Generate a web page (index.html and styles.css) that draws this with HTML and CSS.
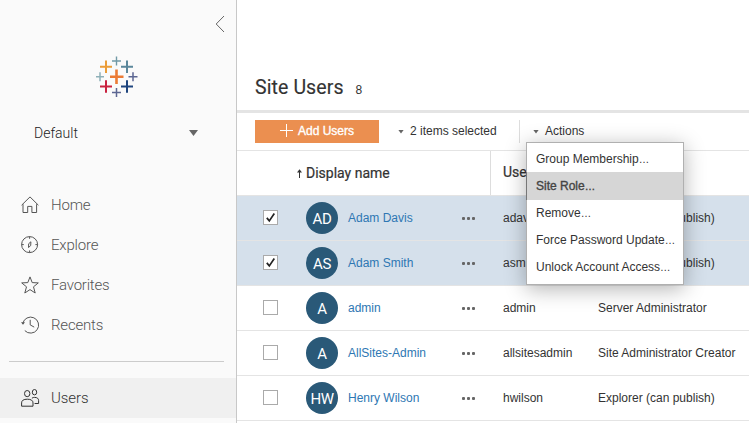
FILE: index.html
```html
<!DOCTYPE html>
<html lang="en">
<head>
<meta charset="utf-8">
<title>Site Users</title>
<link rel="stylesheet" href="styles.css">
</head>
<body>
<div class="app">
  <aside class="sidebar">
    <svg class="collapse" viewBox="0 0 10 18"><path d="M9 1 1.2 9 9 17"/></svg>
    <svg class="logo" viewBox="0 0 42 42">
      <g fill="none">
        <path stroke="#eb7b35" stroke-width="2.6" d="M20.5 13.5v14.5M14 20.7h13.5"/>
        <path stroke="#eb9c37" stroke-width="2" d="M10 4.5v12.4M4 10.8h12"/>
        <path stroke="#5b879b" stroke-width="2" d="M31 4.500v12.4M25 10.800h12"/>
        <path stroke="#c9223f" stroke-width="2" d="M10 24.300v12.400M4 30.500h12"/>
        <path stroke="#1f457e" stroke-width="2" d="M31 24.300v12.400M25 30.500h12"/>
        <path stroke="#7199a6" stroke-width="1.4" d="M20.500 .5v9M16 5h9"/>
        <path stroke="#5c6692" stroke-width="1.5" d="M20.500 32v9M16 36.500h9M37 16.200v9M32.500 20.700h9"/>
        <path stroke="#8eb0b8" stroke-width="1.500" d="M4 16.200v9M0 20.700h8"/>
      </g>
    </svg>
    <div class="site-picker"><span>Default</span><i class="caret caret-lg"></i></div>
    <nav>
      <a class="nav-item"><svg viewBox="0 0 18 18"><path d="M.6 9.200 9 .9l8.400 8.300M2 8.200v8.300h4.700v-6.100h4.200v6.100h4.700V8.200"/></svg>Home</a>
      <a class="nav-item"><svg viewBox="0 0 18 18"><circle cx="8.600" cy="8.600" r="8"/><path d="M8.600.5v2.300M8.600 14.400v2.300M.5 8.600h2.300M14.400 8.600h2.300M9.900 5.800 9.700 9.600 7.500 11.500 7.700 7.700z"/></svg>Explore</a>
      <a class="nav-item"><svg viewBox="0 0 18 18"><path d="m9 .9 2.200 5.700 6.100.3-4.800 3.900 1.700 6.200L9 13.600 3.800 17l1.700-6.200L.7 6.900l6.100-.3z"/></svg>Favorites</a>
      <a class="nav-item"><svg viewBox="0 0 18 18"><path d="M1.800 7.400A8 8 0 1 1 3.800 14.600M9.200 3.800v5.100l4 2.200"/><path class="solid" d="M0 6.200h4L2 8.800z"/></svg>Recents</a>
    </nav>
    <hr>
    <a class="nav-item active"><svg viewBox="0 0 18 18"><ellipse cx="6.200" cy="4.600" rx="2.700" ry="3.100"/><ellipse cx="13.500" cy="3.200" rx="2.200" ry="2.700"/><path d="M.6 17.200v-3.300c0-2.500 2-3.700 5.700-3.700s5.700 1.200 5.700 3.700v3.300zM10.900 9.200c1-.7 1.800-.8 2.700-.8 2.700 0 4 1.200 4 3.200v2.900h-4"/></svg>Users</a>
  </aside>

  <main>
    <header><h1>Site Users</h1><span class="count">8</span></header>
    <div class="toolbar">
      <button class="add"><svg viewBox="0 0 13 13"><path d="M6.500 0v13M0 6.500h13"/></svg>Add Users</button>
      <span class="selected"><i class="caret"></i>2 items selected</span>
      <div class="actions"><i class="caret"></i>Actions
        <div class="menu">
          <div class="menu-item">Group Membership<span class="dots">…</span></div>
          <div class="menu-item hover">Site Role<span class="dots">…</span></div>
          <div class="menu-item">Remove<span class="dots">…</span></div>
          <div class="menu-item">Force Password Update<span class="dots">…</span></div>
          <div class="menu-item">Unlock Account Access<span class="dots">…</span></div>
        </div>
      </div>
    </div>
    <div class="row head">
      <div class="sort"><svg viewBox="0 0 5 9"><path d="M2.500 1v8"/><path class="solid" d="M0 3.500 2.500 .3 5 3.500z"/></svg>Display name</div>
      <div class="username">Username</div>
    </div>
    <div class="row chosen">
      <span class="check"><svg viewBox="0 0 13 13"><path d="m2.800 6.900 2.500 3L10.300 2.500"/></svg></span>
      <span class="avatar">AD</span><a class="name">Adam Davis</a><span class="more"><i></i><i></i><i></i></span>
      <span class="user">adavis</span><span>Explorer (can publish)</span>
    </div>
    <div class="row chosen">
      <span class="check"><svg viewBox="0 0 13 13"><path d="m2.800 6.900 2.500 3L10.300 2.500"/></svg></span>
      <span class="avatar">AS</span><a class="name">Adam Smith</a><span class="more"><i></i><i></i><i></i></span>
      <span class="user">asmith</span><span>Explorer (can publish)</span>
    </div>
    <div class="row">
      <span class="check"></span>
      <span class="avatar">A</span><a class="name">admin</a><span class="more"><i></i><i></i><i></i></span>
      <span class="user">admin</span><span>Server Administrator</span>
    </div>
    <div class="row">
      <span class="check"></span>
      <span class="avatar">A</span><a class="name">AllSites-Admin</a><span class="more"><i></i><i></i><i></i></span>
      <span class="user">allsitesadmin</span><span>Site Administrator Creator</span>
    </div>
    <div class="row">
      <span class="check"></span>
      <span class="avatar">HW</span><a class="name">Henry Wilson</a><span class="more"><i></i><i></i><i></i></span>
      <span class="user">hwilson</span><span>Explorer (can publish)</span>
    </div>
  </main>
</div>
</body>
</html>
```
FILE: styles.css
```css
* { box-sizing: border-box; }

body {
  margin: 0;
  overflow: hidden;
  background: #fff;
  color: #333;
  font: 12px/16px "Liberation Sans", Arial, sans-serif;
}

.app { display: flex; height: 423px; }

svg { display: block; fill: none; stroke: currentColor; overflow: visible; }
.solid { fill: currentColor; stroke: none; }

.sidebar {
  display: flex;
  flex-direction: column;
  flex: none;
  width: 237px;
  background: #fafafa;
  border-right: 1px solid #c8c8c8;
}

.collapse { width: 10px; height: 18px; margin: 15px 11px 0 auto; color: #666; flex: none; }
.logo { width: 42px; height: 42px; margin: 23px 0 0 96px; flex: none; }

.site-picker {
  display: flex;
  align-items: center;
  justify-content: space-between;
  height: 20px;
  margin: 25px 38px 0 34px;
  font: 300 14px/20px Roboto, sans-serif;
  color: #222;
}

.caret {
  flex: none;
  width: 6px;
  height: 4px;
  margin-top: 1px;
  background: #666;
  clip-path: polygon(0 0, 100% 0, 50% 100%);
}
.caret-lg { width: 9px; height: 6px; margin-top: 0; }

nav { margin-top: 42px; }

.nav-item {
  display: flex;
  align-items: center;
  gap: 12px;
  height: 40px;
  padding-left: 21px;
  font: 300 15px/20px Roboto, sans-serif;
  letter-spacing: -.2px;
  color: #555;
}
.nav-item svg { width: 18px; height: 18px; stroke-width: 1; }

hr { width: 215px; height: 1px; margin: 16px 0 16px 9px; border: 0; background: #ccc; flex: none; }
.active { flex: none; background: #f0f0f0; color: #333; letter-spacing: -.1px; }

main { flex: 1; min-width: 0; }

header {
  display: flex;
  align-items: baseline;
  gap: 12px;
  height: 113px;
  padding: 76px 0 0 18px;
  border-bottom: 3px solid #e4e4e4;
}
h1 { margin: 0; font: 400 19.5px/24px Roboto, sans-serif; letter-spacing: .1px; -webkit-text-stroke: .15px #333; }
.count { font-size: 12px; }

.toolbar {
  display: flex;
  align-items: center;
  height: 38px;
  padding-left: 18px;
  border-bottom: 1px solid #e4e4e4;
}
.add {
  display: flex;
  align-items: center;
  justify-content: center;
  gap: 5px;
  width: 124px;
  height: 23px;
  padding: 0 0 2px;
  border: 0;
  background: #eb8f50;
  color: #fff;
  font: 400 12px/16px "Liberation Sans", Arial, sans-serif;
  -webkit-text-stroke: .35px #fff;
}
.add svg { width: 13px; height: 13px; }
.selected { display: flex; align-items: center; gap: 6px; width: 140px; padding: 0 0 1px 19px; }

.actions {
  position: relative;
  display: flex;
  align-items: center;
  gap: 6px;
  height: 23px;
  padding: 0 0 1px 13px;
  border-left: 1px solid #ddd;
}

.menu {
  position: absolute;
  left: 6px;
  top: 22px;
  width: 158px;
  height: 143px;
  padding-top: 2px;
  background: #fff;
  border: 1px solid #b0b0b0;
  box-shadow: 0 4px 20px rgba(0, 0, 0, .3);
}
.menu-item {
  height: 28px;
  margin-bottom: -1px;
  padding-left: 9px;
  line-height: 28px;
  white-space: nowrap;
}
.dots { font-size: 10.5px; }
.hover { margin-left: -1px; border-left: 1px solid #777; background: #d6d6d6; color: #444; -webkit-text-stroke: .35px #444; }

.row {
  display: flex;
  align-items: center;
  height: 45px;
  padding-left: 26px;
  border-bottom: 1px solid #e4e4e4;
  white-space: nowrap;
}
.chosen { background: #d5e0eb; }

.head { padding: 0 0 1px 60px; font: 400 14px/18px Roboto, sans-serif; -webkit-text-stroke: .2px #333; }
.sort { display: flex; align-items: center; gap: 4px; width: 193px; }
.sort svg { width: 5px; height: 9px; margin-top: 2px; }
.username { height: 44px; padding-left: 12px; border-left: 1px solid #ddd; line-height: 43px; }

.check { width: 15px; height: 15px; margin-bottom: 1px; background: #fff; border: 1px solid #aaa; }
.check svg { width: 13px; height: 13px; color: #222; stroke-width: 1.700; }

.avatar {
  width: 32px;
  height: 32px;
  margin: 0 10px 0 28px;
  border-radius: 50%;
  background: #2a5978;
  color: #fff;
  font: 400 15px/34px Roboto, sans-serif;
  letter-spacing: -.4px;
  text-align: center;
}
.name { width: 114px; color: #2e77b3; }
.more { display: flex; gap: 2px; width: 41px; padding-top: 1px; }
.more i { width: 3px; height: 3px; border-radius: 1px; background: #666; }
.user { width: 95px; }
```
